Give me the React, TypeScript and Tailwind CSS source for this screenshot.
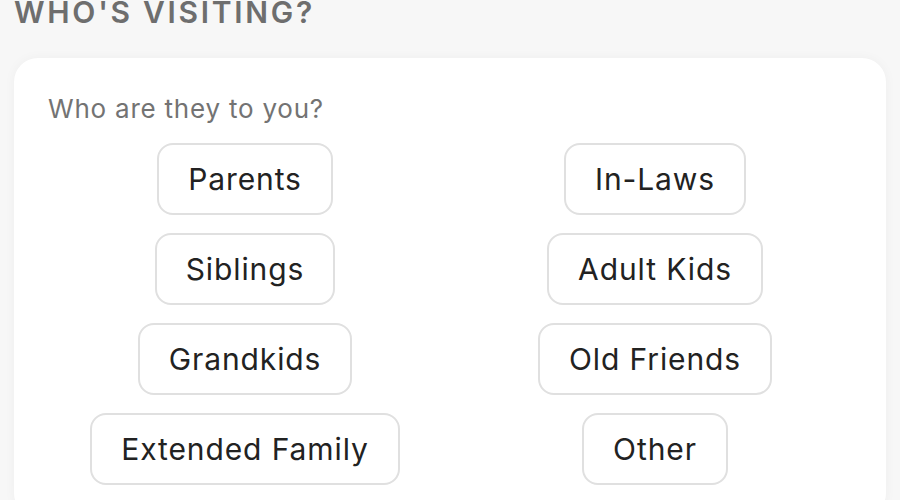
const options = [
  'Parents',
  'In-Laws',
  'Siblings',
  'Adult Kids',
  'Grandkids',
  'Old Friends',
  'Extended Family',
  'Other',
];

export default function App() {
  return (
    <div className="h-[500px] overflow-hidden bg-[#f7f7f7] px-[14px] font-['Inter','Noto_Sans',sans-serif]">
      <h2 className="-mt-[3px] text-[30px] leading-none font-semibold tracking-[0.09em] text-[#6e6e6e]">
        WHO'S VISITING?
      </h2>
      <div className="mt-[31px] rounded-[24px] bg-white px-[34px] pt-[38px] pb-8 shadow-[0_0_12px_rgba(0,0,0,0.04)]">
        <p className="text-[26px] leading-none tracking-[0.03em] text-[#737373]">
          Who are they to you?
        </p>
        <div className="mt-[21px] grid grid-cols-2 gap-x-4 gap-y-[18px]">
          {options.map(label => (
            <div key={label} className="flex justify-center">
              <button className="h-[72px] rounded-[16px] border-2 border-[#e0e0e0] bg-white px-[29px] text-[30px] leading-none tracking-[0.03em] text-[#222222]">
                {label}
              </button>
            </div>
          ))}
        </div>
      </div>
    </div>
  );
}
